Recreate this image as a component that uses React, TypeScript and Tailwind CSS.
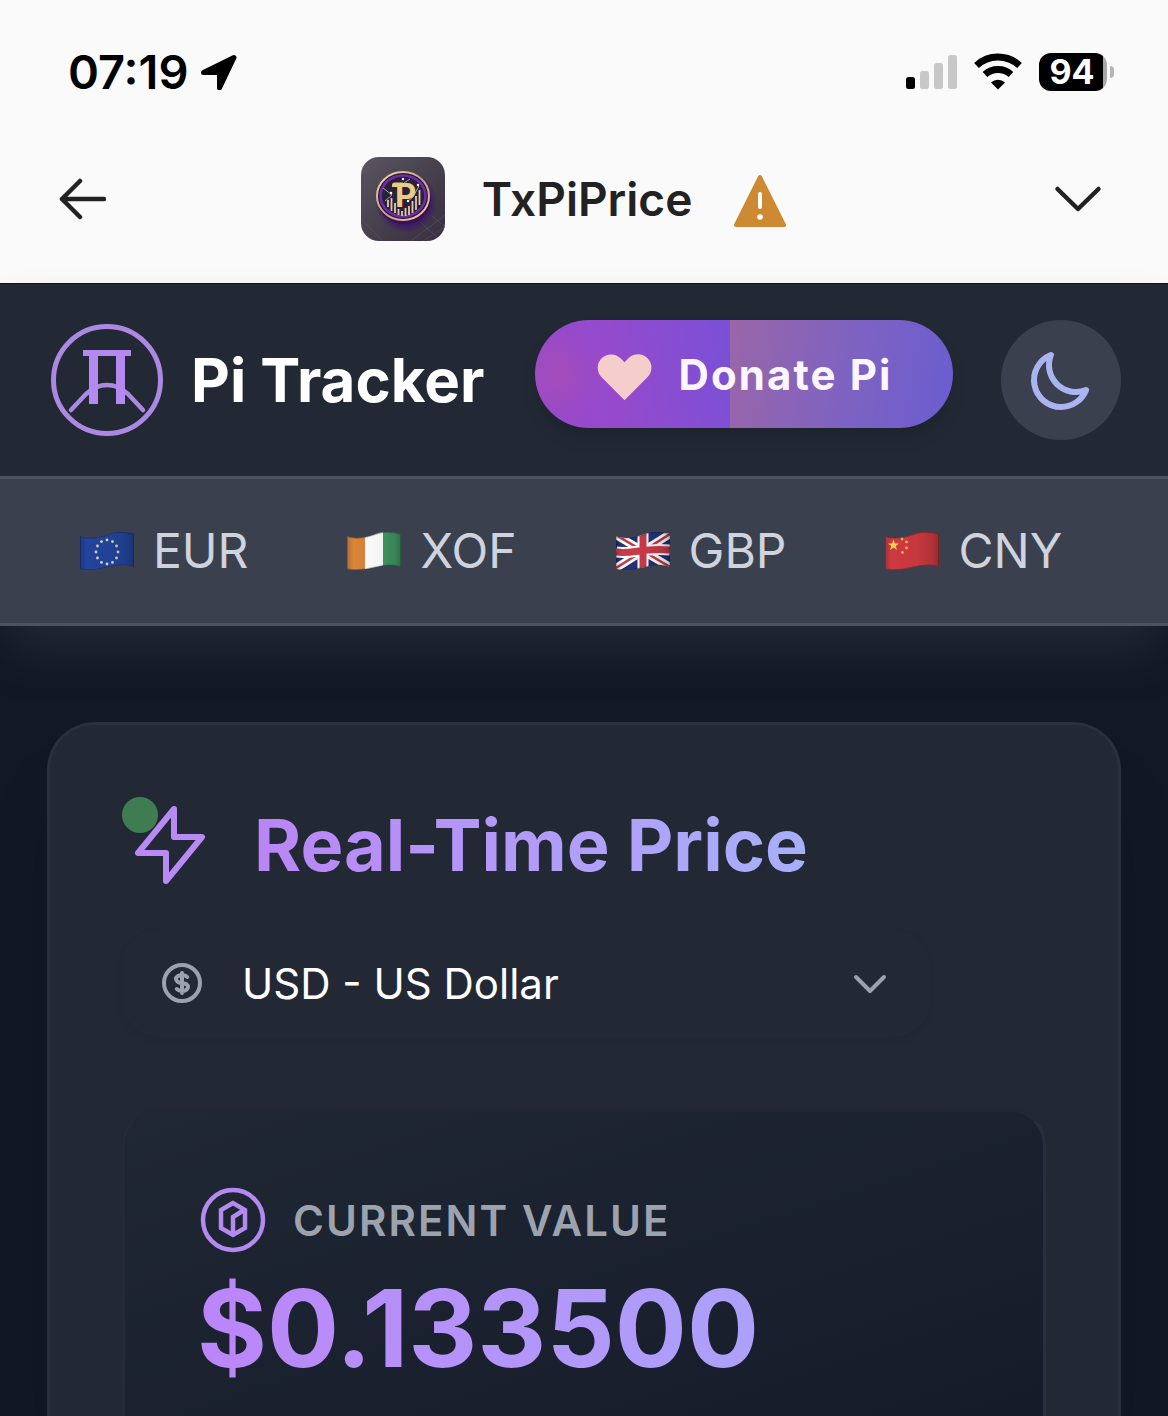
import { useState, ReactNode } from 'react';

interface FlagProps {
    id: string;
    children: ReactNode;
}

const WAVE = 'M0 5C9 9 21 6 29 3S47 1 54 3V36C46 33 37 34 29 36S9 40 0 38Z';

// Waving flag frame, children are painted as the flag's own pattern
function Flag({ id, children }: FlagProps) {
    return (
        <svg width="60" height="40" viewBox="-3 0 60 40" aria-hidden="true">
            <defs>
                <clipPath id={`${id}-wave`}>
                    <path d={WAVE} />
                </clipPath>
                <linearGradient id={`${id}-shade`} x1="0" x2="1" y1="0" y2="0">
                    <stop offset="0" stopColor="#000" stopOpacity="0.18" />
                    <stop offset="0.12" stopColor="#000" stopOpacity="0" />
                    <stop offset="0.6" stopColor="#000" stopOpacity="0.04" />
                    <stop offset="0.88" stopColor="#000" stopOpacity="0.14" />
                    <stop offset="1" stopColor="#000" stopOpacity="0.28" />
                </linearGradient>
            </defs>
            <g clipPath={`url(#${id}-wave)`}>
                {children}
                <rect width="54" height="40" fill={`url(#${id}-shade)`} />
                <path d={WAVE} fill="none" stroke="#000" strokeOpacity="0.25" strokeWidth="1.5" />
            </g>
        </svg>
    );
}

const EU_STARS = Array.from({ length: 12 }, (_, i) => {
    const angle = (i * Math.PI) / 6;
    return { x: 27 + Math.sin(angle) * 11, y: 21 - Math.cos(angle) * 12 };
});

const currencies = [
    {
        code: 'EUR',
        flag: (
            <Flag id="eur">
                <rect width="54" height="40" fill="#23449c" />
                {EU_STARS.map((s, i) => (
                    <circle key={i} cx={s.x} cy={s.y} r="1.4" fill="#d5dab8" />
                ))}
            </Flag>
        ),
    },
    {
        code: 'XOF',
        flag: (
            <Flag id="xof">
                <rect width="18" height="40" fill="#d9853a" />
                <rect x="18" width="18" height="40" fill="#fff" />
                <rect x="36" width="18" height="40" fill="#439a66" />
            </Flag>
        ),
    },
    {
        code: 'GBP',
        flag: (
            <Flag id="gbp">
                <rect width="54" height="40" fill="#22317c" />
                <path d="M0 4L54 36M54 3L0 37" stroke="#fff" strokeWidth="8" />
                <path d="M0 4L54 36M54 3L0 37" stroke="#c23a48" strokeWidth="2.5" />
                <path d="M27 0V40M0 21C15 24 28 16 54 19" fill="none" stroke="#fff" strokeWidth="11" />
                <path d="M27 0V40M0 21C15 24 28 16 54 19" fill="none" stroke="#cb3b49" strokeWidth="7" />
            </Flag>
        ),
    },
    {
        code: 'CNY',
        flag: (
            <Flag id="cny">
                <rect width="54" height="40" fill="#cd3a40" />
                <path
                    d="M8.5 8.500l1.400 4h4.200l-3.400 2.500 1.300 4.100-3.500-2.500-3.500 2.500 1.300-4.100-3.400-2.500h4.200z"
                    fill="#f6d64a"
                />
                <g fill="#f0b840">
                    <circle cx="17" cy="8" r="1.400" />
                    <circle cx="21.500" cy="11" r="1.400" />
                    <circle cx="21.500" cy="17" r="1.400" />
                    <circle cx="17.500" cy="21.500" r="1.400" />
                </g>
            </Flag>
        ),
    },
];

// App badge shown in the browser bar
function AppBadge() {
    return (
        <svg width="84" height="84" viewBox="0 0 84 84" className="shrink-0" aria-hidden="true">
            <defs>
                <linearGradient id="badge-bg" x1="0" y1="0" x2="1" y2="1">
                    <stop offset="0" stopColor="#5b5561" />
                    <stop offset="0.5" stopColor="#47404d" />
                    <stop offset="1" stopColor="#382f42" />
                </linearGradient>
                <linearGradient id="badge-gold" x1="0" y1="0" x2="1" y2="1">
                    <stop offset="0" stopColor="#f3dfb0" />
                    <stop offset="0.5" stopColor="#c99d78" />
                    <stop offset="1" stopColor="#efd0a4" />
                </linearGradient>
                <radialGradient id="badge-glow">
                    <stop offset="0.6" stopColor="#3b0872" />
                    <stop offset="1" stopColor="#3b0872" stopOpacity="0" />
                </radialGradient>
            </defs>
            <rect width="84" height="84" rx="18" fill="url(#badge-bg)" />
            <path d="M50 84L84 58M62 84L84 70M0 62L22 84M60 66L76 80M70 58L84 70" stroke="#5a5263" strokeWidth="0.6" />
            <circle cx="45" cy="45" r="31" fill="url(#badge-glow)" />
            <ellipse cx="43" cy="42" rx="27" ry="25" fill="#3a1055" />
            <ellipse cx="42" cy="39" rx="26" ry="24" fill="#241634" stroke="url(#badge-gold)" strokeWidth="2" />
            <ellipse cx="42" cy="39" rx="22.500" ry="20.500" fill="#2a2038" stroke="#6d2cab" strokeWidth="2.600" />
            <path d="M22 31L31 38L24 44M49 22L43 26M47 44L52 40L58 29" fill="none" stroke="#a99db0" strokeWidth="1" />
            <path
                d="M27 43v7M30.500 41v13M34 46v10M37.500 52v6M41 54v5M44.500 51v8M48 49v9M51.500 44v12M55 39v14M58.500 33v15"
                stroke="#e0c8a8"
                strokeWidth="1.800"
            />
            <path d="M31 30V28C31 26.500 32 25.500 34 25.500H42V30Z" fill="#e8cd86" />
            <text x="34" y="50" fontFamily="Inter, sans-serif" fontWeight="700" fontSize="33" fill="#e8cd86">
                P
            </text>
            <g fill="#fff">
                <circle cx="30" cy="36" r="1.300" />
                <circle cx="42" cy="22" r="1.200" />
                <circle cx="47" cy="44" r="1.200" />
                <circle cx="57" cy="28" r="1.200" />
            </g>
        </svg>
    );
}

function StatusBar() {
    return (
        <div className="flex items-center justify-between pt-12 pl-17 pr-[54px] text-black">
            <div className="flex items-center gap-3">
                <span className="text-[47px] leading-[48px] font-semibold">07:19</span>
                <svg width="36" height="36" viewBox="0 0 36 36" aria-hidden="true">
                    <path d="M2.500 18.500L33 3.500L18.500 34V18.500Z" fill="#000" stroke="#000" strokeWidth="5" strokeLinejoin="round" />
                </svg>
            </div>
            <div className="flex items-center gap-4">
                <svg width="52" height="36" viewBox="0 0 52 36" aria-hidden="true">
                    <rect x="1" y="23" width="9" height="12" rx="2.500" fill="#000" />
                    <g fill="#c8c8c8">
                        <rect x="15" y="17" width="9" height="18" rx="2.500" />
                        <rect x="29" y="9" width="9" height="26" rx="2.500" />
                        <rect x="43" y="1" width="9" height="34" rx="2.500" />
                    </g>
                </svg>
                <svg width="50" height="38" viewBox="0 0 50 38" aria-hidden="true">
                    <path d="M3.500 12.500A31.500 31.500 0 0 1 46.500 12.500" fill="none" stroke="#000" strokeWidth="7" />
                    <path d="M12 21.500A19.500 19.500 0 0 1 38 21.500" fill="none" stroke="#000" strokeWidth="7" />
                    <path d="M18 29.500A10 10 0 0 1 32 29.500L25 36.500Z" fill="#000" />
                </svg>
                <div className="flex items-center gap-[3px]">
                    <div className="flex h-[38px] w-[68px] items-center justify-center rounded-xl bg-linear-to-r from-black from-94% to-[#a8a8a8] to-94% pr-[2px] text-[34px] leading-none font-bold text-white">
                        94
                    </div>
                    <div className="h-3 w-1 rounded-r-full bg-[#b4b4b4]" />
                </div>
            </div>
        </div>
    );
}

function BrowserBar() {
    return (
        <div className="flex items-center justify-between px-14 pt-[61px] pb-[42px] text-[#222]">
            <button type="button" aria-label="Back" className="w-[50px]">
                <svg width="50" height="50" viewBox="0 0 50 50" fill="none" stroke="currentColor" strokeWidth="4.500" strokeLinecap="round" strokeLinejoin="round">
                    <path d="M48 25H6M24 7L6 25L24 43" />
                </svg>
            </button>
            <div className="flex items-center gap-[37px]">
                <AppBadge />
                <span className="text-[46px] leading-[60px] font-semibold">TxPiPrice</span>
                <svg width="60" height="54" viewBox="0 0 60 54" className="mt-1" aria-label="Warning">
                    <path d="M31 3L55 51H7Z" fill="#cd8a33" stroke="#cd8a33" strokeWidth="4" strokeLinejoin="round" />
                    <path d="M31 20V33" stroke="#fff" strokeWidth="4" strokeLinecap="round" />
                    <circle cx="31" cy="43" r="2.800" fill="#fff" />
                </svg>
            </div>
            <button type="button" aria-label="Close" className="flex w-[68px] justify-center">
                <svg width="48" height="28" viewBox="0 0 48 28" fill="none" stroke="currentColor" strokeWidth="4.500" strokeLinecap="round" strokeLinejoin="round">
                    <path d="M3.500 4L24 24L44.500 4" />
                </svg>
            </button>
        </div>
    );
}

function Header() {
    return (
        <header className="relative z-10 shadow-[0_30px_45px_-9px_rgba(55,62,74,0.45)]">
            <div className="flex items-center border-t border-b-[3px] border-t-[#10141c] border-b-[#4c5261] bg-[#222935] pr-[47px] pl-12 py-9">
                <div className="flex items-center gap-[23px]">
                    <svg width="120" height="120" viewBox="0 0 120 120" fill="none" stroke="#b48af0" aria-hidden="true">
                        <circle cx="59" cy="60" r="53.500" strokeWidth="5" stroke="#ac88e2" />
                        <path d="M23 90L38 74C51 62 67 62 80 74L95 90" strokeWidth="4.500" strokeLinecap="round" stroke="#ac88e2" />
                        <path d="M35 33H83" strokeWidth="6" />
                        <path d="M45.500 33V84M72.500 33V84" strokeWidth="9" />
                    </svg>
                    <h1 className="text-[60px] leading-[72px] font-bold text-white">Pi Tracker</h1>
                </div>
                <button
                    type="button"
                    className="ml-auto flex h-27 w-[418px] shrink-0 items-center justify-center gap-5 self-start rounded-full bg-[radial-gradient(circle_at_12%_50%,rgba(168,78,178,0.7),rgba(168,78,178,0)_26%),linear-gradient(80deg,#9a48cb_0%,#954acd_40%,#7a50d6_100%),linear-gradient(100deg,#9a66a8_44%,#7d62c2_75%,#6a5dd0_100%)] bg-[length:195px_100%,195px_100%,100%_100%] bg-no-repeat pr-1 text-[42px] font-bold tracking-wider text-[#fdf6ff] shadow-[0_12px_18px_-3px_rgba(0,0,0,0.15)]"
                >
                    <svg width="67" height="67" viewBox="0 0 20 20" fill="#f5cdca" aria-hidden="true">
                        <path d="M3.172 5.172a4 4 0 015.656 0L10 6.343l1.172-1.171a4 4 0 115.656 5.656L10 17.657l-6.828-6.829a4 4 0 010-5.656z" />
                    </svg>
                    <span>Donate Pi</span>
                </button>
                <button
                    type="button"
                    aria-label="Toggle theme"
                    className="ml-12 flex size-30 shrink-0 items-center justify-center rounded-full bg-[#3a404e] text-[#a9b4f0]"
                >
                    <svg width="72" height="72" viewBox="0 0 24 24" fill="none" stroke="currentColor" strokeWidth="2" strokeLinecap="round" strokeLinejoin="round">
                        <path d="M20.354 15.354A9 9 0 018.646 3.646 9.003 9.003 0 0012 21a9.003 9.003 0 008.354-5.646z" />
                    </svg>
                </button>
            </div>

            {/* Currency ticker */}
            <nav className="flex gap-24 overflow-hidden border-b-[3px] border-[#4c5261] bg-[#3b404f] px-[77px] py-9">
                {currencies.map((c) => (
                    <button
                        key={c.code}
                        type="button"
                        className="flex shrink-0 items-center gap-4 text-[48px] leading-[72px] text-[#cfd3dd]"
                    >
                        {c.flag}
                        <span>{c.code}</span>
                    </button>
                ))}
            </nav>
        </header>
    );
}

function CurrencySelect() {
    const [currency, setCurrency] = useState('USD');

    return (
        <div className="relative mt-9 w-[808px] max-w-full text-[#9ca1ad]">
            <select
                aria-label="Currency"
                value={currency}
                onChange={(e) => setCurrency(e.target.value)}
                className="h-27 w-full appearance-none rounded-[36px] bg-[#222935] pr-24 pl-30 text-[42px] text-white shadow-[0_3px_6px_rgba(0,0,0,0.06)]"
            >
                <option value="USD">USD - US Dollar</option>
                <option value="EUR">EUR - Euro</option>
                <option value="GBP">GBP - British Pound</option>
            </select>
            <div className="pointer-events-none absolute inset-0 flex items-center justify-between px-9">
                <svg width="48" height="48" viewBox="0 0 24 24" fill="none" stroke="currentColor" strokeWidth="2" strokeLinecap="round" strokeLinejoin="round">
                    <path d="M12 8c-1.657 0-3 .895-3 2s1.343 2 3 2 3 .895 3 2-1.343 2-3 2m0-8c1.110 0 2.080.402 2.599 1M12 8V7m0 1v8m0 0v1m0-1c-1.110 0-2.080-.402-2.599-1M21 12a9 9 0 11-18 0 9 9 0 0118 0z" />
                </svg>
                <svg width="48" height="48" viewBox="0 0 24 24" fill="none" stroke="currentColor" strokeWidth="2" strokeLinecap="round" strokeLinejoin="round">
                    <path d="M19 9l-7 7-7-7" />
                </svg>
            </div>
        </div>
    );
}

export default function App() {
    return (
        <div className="flex min-h-screen flex-col bg-[#121826] font-['Inter',sans-serif]">
            <div className="bg-[#fafafa]">
                <StatusBar />
                <BrowserBar />
            </div>
            <Header />

            <main className="flex flex-1 flex-col px-[47px] pt-24">
                <section className="flex flex-1 flex-col rounded-t-[48px] border-[3px] border-b-0 border-[#2a303d] bg-[#222935] px-18 pt-18 shadow-[0_60px_75px_-15px_rgba(0,0,0,0.2)]">
                    <div className="flex items-center gap-9">
                        <div className="relative size-24">
                            <span className="absolute top-0 left-0 size-9 rounded-full bg-[#3f7c52]" />
                            <svg width="96" height="96" viewBox="0 0 24 24" fill="none" stroke="#b98af5" strokeWidth="1.500" strokeLinecap="round" strokeLinejoin="round" className="relative">
                                <path d="M13 10V3L4 14h7v7l9-11h-7z" />
                            </svg>
                        </div>
                        <h2 className="bg-linear-to-r from-[#ba85f6] to-[#a7b0fa] bg-clip-text text-[72px] leading-[96px] font-bold text-transparent">
                            Real-Time Price
                        </h2>
                    </div>

                    <CurrencySelect />

                    {/* Current value panel */}
                    <div className="mt-18 flex-1 rounded-t-[36px] border-[3px] border-b-0 border-t-[#212734] border-r-[#292f3c] border-l-[#242b37] bg-linear-to-br from-[#202834] to-[#161b29] px-18 pt-18">
                        <div className="flex items-center gap-6">
                            <svg width="72" height="72" viewBox="0 0 72 72" fill="none" stroke="#b48af0" strokeWidth="4.500" aria-hidden="true">
                                <circle cx="36" cy="36" r="30" />
                                <path d="M36 19L24 26V44L36 51L48 44V26ZM47 26L36 33V50" />
                            </svg>
                            <span className="text-[42px] font-semibold tracking-wider text-[#9ca3af] uppercase">
                                Current Value
                            </span>
                        </div>
                        <p className="bg-linear-to-r from-[#bb85f8] to-[#a5abfb] bg-clip-text text-[107px] leading-[144px] font-bold text-transparent">
                            $0.133500
                        </p>
                    </div>
                </section>
            </main>
        </div>
    );
}
